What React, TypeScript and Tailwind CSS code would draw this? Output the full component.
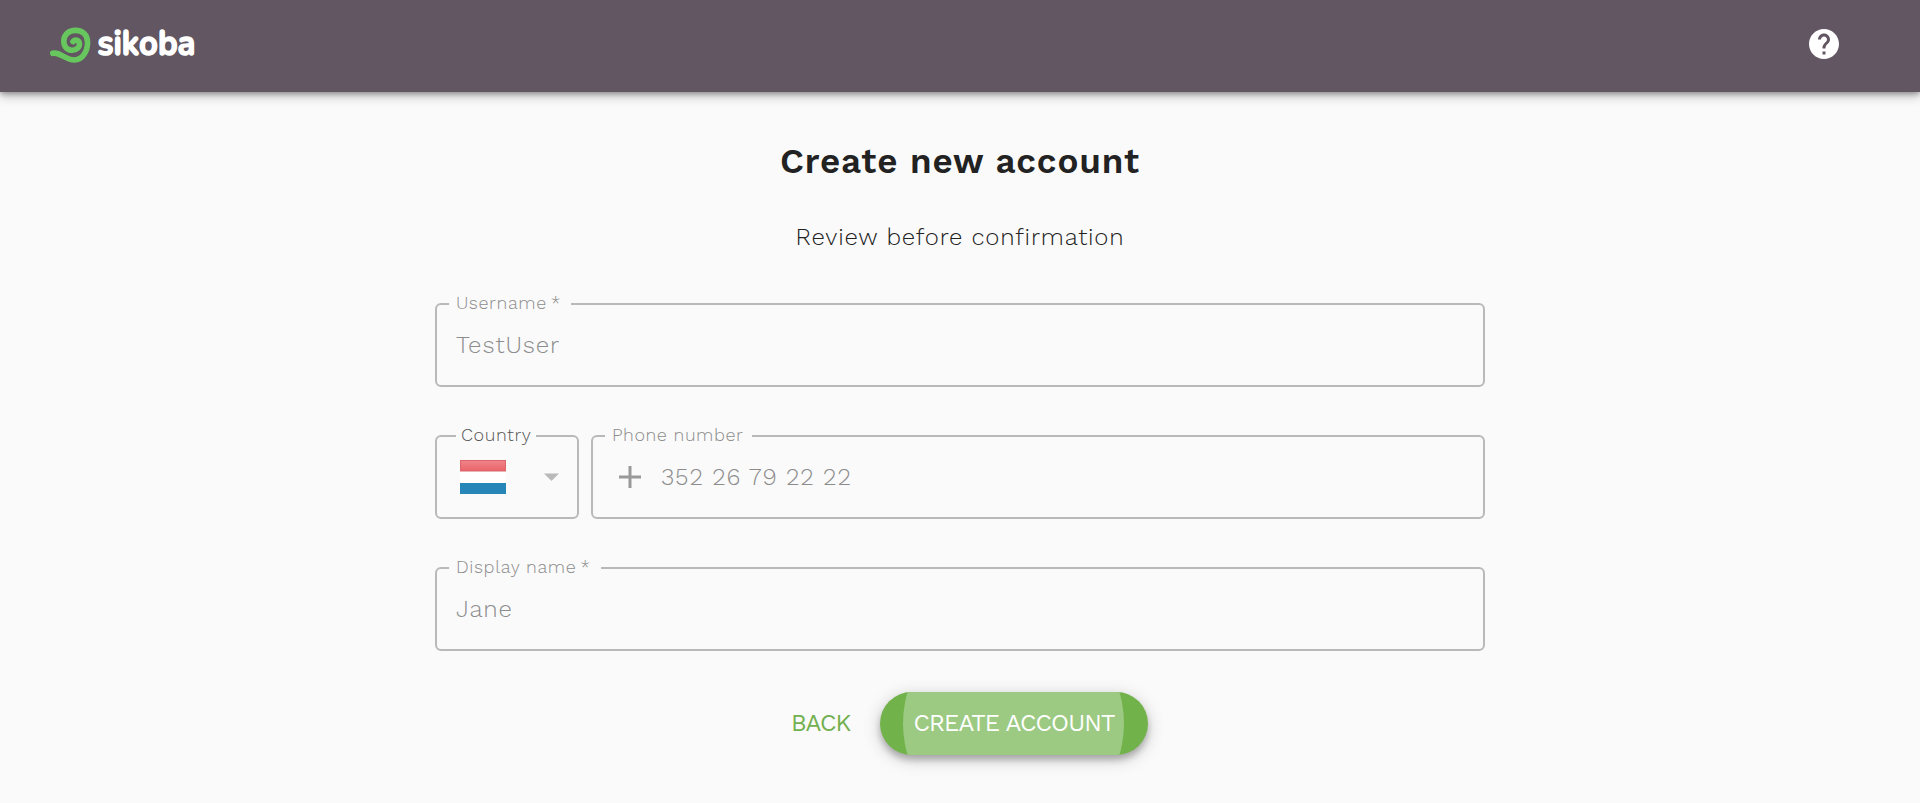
import type { ReactNode } from "react";
import { MdHelp } from "react-icons/md";

function Logo() {
  return (
    <svg width="160" height="60" viewBox="0 -8 160 60" role="img" aria-label="sikoba">
      <path
        d="M3.8 31.3C11 29.5 16 38 25.5 38C33.5 38 38.6 29 38.6 20.5C38.6 12.8 33.6 8.4 26.5 8.4C19.6 8.4 14.8 12.8 14.8 19.2C14.8 25 18.6 28.4 23.4 28.2C28 28 31 24.8 30.4 21.2C29.8 18 26 17.2 24 19.6"
        fill="none"
        stroke="#68c65f"
        strokeWidth="5.6"
        strokeLinecap="round"
        strokeLinejoin="round"
      />
      <text
        x="48.5"
        y="32.5"
        textLength="98"
        lengthAdjust="spacingAndGlyphs"
        fill="#fff"
        stroke="#fff"
        strokeWidth="1.5"
        strokeLinejoin="round"
        className="font-[Nunito,'Open_Sans',sans-serif] text-[36px] font-bold"
      >
        sikoba
      </text>
    </svg>
  );
}

function Field({
  label,
  className,
  legendClass,
  children,
}: {
  label: ReactNode;
  className: string;
  legendClass: string;
  children: ReactNode;
}) {
  return (
    <fieldset className={`h-[84px] min-w-0 rounded-[6px] border-2 border-[#b9b9b9] ${className}`}>
      <legend className={`h-[2px] whitespace-nowrap text-[18px] leading-[0px] ${legendClass}`}>{label}</legend>
      <div className="flex h-[79px] items-center text-[24px] font-[330] text-[#8c8c8c]">{children}</div>
    </fieldset>
  );
}

function Required({ text }: { text: string }) {
  return (
    <>
      {text}
      <span className="ml-1">*</span>
    </>
  );
}

export default function App() {
  return (
    <div className="flex h-[803px] flex-col overflow-hidden bg-[#fafafa] font-['Work_Sans',Inter,sans-serif] text-[#222]">
      <header className="flex h-[92px] shrink-0 items-start justify-between bg-[#615661] pl-[49px] pr-[78px] shadow-[0_2px_5px_rgba(0,0,0,0.3),0_5px_10px_rgba(0,0,0,0.2)]">
        <div className="mt-[14px]">
          <Logo />
        </div>
        <button aria-label="Help" className="mt-[26px] text-white">
          <MdHelp size={36} />
        </button>
      </header>
      <main className="mx-auto flex w-[1050px] flex-col items-center">
        <h1 className="mt-[45px] h-12 whitespace-nowrap text-[35px] font-semibold leading-[48px] tracking-[0.85px]">
          Create new account
        </h1>
        <p className="mt-[36px] h-8 whitespace-nowrap text-[24px] font-[350] leading-8 tracking-[0.82px]">
          Review before confirmation
        </p>
        <form className="mt-[50px] flex w-full flex-col gap-12">
          <Field label={<Required text="Username" />} className="w-full" legendClass="ml-3 w-[122px] pl-[7px] font-[330] text-[#8c8c8c] tracking-[0.6px]">
            <span className="ml-[19px] tracking-[0.95px]">TestUser</span>
          </Field>
          <div className="flex gap-3">
            <Field label="Country" className="w-36" legendClass="ml-[19px] w-20 pl-[5px] font-[330] text-[#555] tracking-[0.6px]">
              <svg width="46" height="34" className="ml-[23px]" aria-label="Luxembourg">
                <defs>
                  <linearGradient id="red" x2="0" y2="1">
                    <stop offset="0" stopColor="#f0858a" />
                    <stop offset="1" stopColor="#ea6369" />
                  </linearGradient>
                </defs>
                <rect width="46" height="34" fill="#fff" />
                <rect x="0.5" y="0.5" width="45" height="10.5" fill="url(#red)" stroke="#d9666b" />
                <rect y="23" width="46" height="11" fill="#2686b8" />
              </svg>
              <svg width="15" height="8" className="ml-[38px]" aria-hidden="true">
                <path d="M0 0.5h15L7.5 8z" fill="#b9b9b9" />
              </svg>
            </Field>
            <Field label="Phone number" className="flex-1" legendClass="ml-3 w-[147px] pl-[7px] font-[330] text-[#8c8c8c] tracking-[0.55px]">
              <svg width="22" height="22" className="ml-[26px]" aria-hidden="true">
                <path d="M11 0v22M0 11h22" stroke="#999" strokeWidth="3" />
              </svg>
              <span className="ml-5 tracking-[0.9px]">352 26 79 22 22</span>
            </Field>
          </div>
          <Field label={<Required text="Display name" />} className="w-full" legendClass="ml-3 w-[152px] pl-[7px] font-[330] text-[#8c8c8c] tracking-[0.6px]">
            <span className="ml-[19px] tracking-[0.9px]">Jane</span>
          </Field>
        </form>
        <div className="mt-[41px] flex h-[63px] w-full items-center pl-[356px] text-[24px] tracking-[-0.9px]">
          <button className="w-[89px] whitespace-nowrap pb-0.5 text-left text-[#72b04f]">BACK</button>
          <button className="relative flex h-[63px] w-[268px] items-center justify-center whitespace-nowrap rounded-full bg-[#71b34a] text-white shadow-[0_5px_6px_rgba(0,0,0,0.22),0_4px_18px_rgba(0,0,0,0.2)]">
            <span className="absolute inset-0 overflow-hidden rounded-full">
              <span className="absolute left-[23px] top-[-79px] size-[221px] rounded-full bg-[#9cca82]" />
            </span>
            <span className="relative pb-0.5">CREATE ACCOUNT</span>
          </button>
        </div>
      </main>
    </div>
  );
}
